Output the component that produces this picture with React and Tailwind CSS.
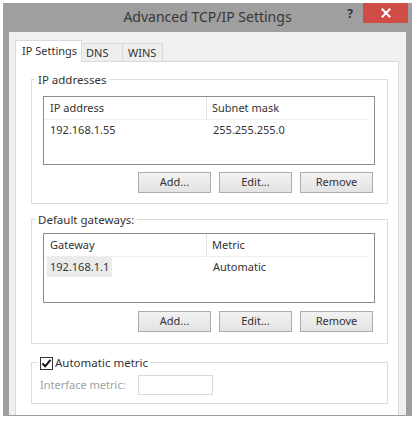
import React from "react";

function Btn({ children }) {
  return (
    <div className="w-[73px] h-[21px] border border-[#acacac] bg-gradient-to-b from-[#f2f2f2] to-[#e3e3e3] flex items-center justify-center text-[#333]">
      {children}
    </div>
  );
}

function ListBox({ cols, row, highlight, h }) {
  return (
    <div className={`border border-[#8c8c8c] bg-white ${h}`}>
      <div className="flex h-[23px] items-center">
        <div className="w-[163px] h-full pl-[6px] flex items-center border-r border-[#e3e3e3] border-b border-b-[#eeeeee]">
          {cols[0]}
        </div>
        <div className="w-[162px] h-full pl-[5px] flex items-center border-b border-[#eeeeee]">{cols[1]}</div>
      </div>
      <div className="flex h-[20px] items-center">
        <div className="w-[163px] h-full flex items-center pl-[3px]">
          <span className={`px-[3px] h-full flex items-center ${highlight ? "bg-[#ebebeb]" : ""}`}>{row[0]}</span>
        </div>
        <div className="pl-[6px]">{row[1]}</div>
      </div>
    </div>
  );
}

export default function App() {
  return (
    <div className="w-[415px] h-[421px] bg-white pt-[3px] pl-[3px] font-['Noto_Sans',sans-serif] text-[11px] text-[#333]">
      <div className="w-[409px] h-[413px] bg-[#9f9f9f] flex flex-col pb-[1px]">
        <div className="h-[29px] shrink-0 grid grid-cols-[1fr_auto_1fr]">
          <div />
          <div className="self-center text-[14px] leading-none text-[#383838] pb-[1px]">Advanced TCP/IP Settings</div>
          <div className="flex justify-end items-start pr-[4px]">
            <span className="mt-[5px] mr-[10px] text-[12px] font-bold leading-none text-[#333]">?</span>
            <div className="w-[45px] h-[20px] bg-[#cf4d45] flex items-center justify-center">
              <svg width="10" height="10" viewBox="0 0 10 10">
                <path d="M1.5 1.5 L8.5 8.5 M8.5 1.5 L1.5 8.5" stroke="#fff" strokeWidth="2" strokeLinecap="square" />
              </svg>
            </div>
          </div>
        </div>
        <div className="flex-1 mx-[6px] bg-[#f0f0f0] pt-[8px] pl-[6px] pr-[7px] flex flex-col">
          <div className="flex items-end">
            <div className="w-[67px] h-[22px] border border-[#d9d9d9] border-b-0 bg-white -mb-px relative z-10 flex items-center pl-[6px]">
              IP Settings
            </div>
            <div className="w-[41px] h-[18px] border border-l-0 border-b-0 border-[#d9d9d9] bg-[#eeeeee] flex items-center pl-[4px] pt-[2px]">
              DNS
            </div>
            <div className="w-[40px] h-[18px] border border-l-0 border-b-0 border-[#d9d9d9] bg-[#eeeeee] flex items-center pl-[5px] pt-[2px]">
              WINS
            </div>
          </div>
          <div className="flex-1 border border-[#d9d9d9] border-b-0 bg-white pl-[15px] pr-[10px] flex flex-col">
            <fieldset className="mt-[10px] border border-[#dcdcdc]">
              <legend className="ml-[3px] px-[3px] leading-[15px] text-[11.5px]">IP addresses</legend>
              <div className="pt-[9px] pl-[11px] pr-[12px] pb-[10px]">
                <ListBox cols={["IP address", "Subnet mask"]} row={["192.168.1.55", "255.255.255.0"]} h="h-[69px]" />
                <div className="mt-[7px] flex justify-end gap-[8px] pr-[2px]">
                  <Btn>Add...</Btn>
                  <Btn>Edit...</Btn>
                  <Btn>Remove</Btn>
                </div>
              </div>
            </fieldset>
            <fieldset className="mt-[8px] border border-[#dcdcdc]">
              <legend className="ml-[3px] px-[3px] leading-[15px] text-[11.5px]">Default gateways:</legend>
              <div className="pt-[6px] pl-[11px] pr-[12px] pb-[11px]">
                <ListBox cols={["Gateway", "Metric"]} row={["192.168.1.1", "Automatic"]} highlight h="h-[70px]" />
                <div className="mt-[8px] flex justify-end gap-[8px] pr-[2px]">
                  <Btn>Add...</Btn>
                  <Btn>Edit...</Btn>
                  <Btn>Remove</Btn>
                </div>
              </div>
            </fieldset>
            <fieldset className="mt-[10px] border border-[#dcdcdc]">
              <legend className="ml-[6px] px-[2px] leading-[15px] text-[11.5px] flex items-center">
                <span className="w-[13px] h-[13px] mt-[3px] border border-[#333] bg-white flex items-center justify-center mr-[2px]">
                  <svg width="11" height="11" viewBox="0 0 11 11">
                    <path d="M1.5 5.5 L4.2 8.3 L9.5 1.8" fill="none" stroke="#111" strokeWidth="2" />
                  </svg>
                </span>
                Automatic metric
              </legend>
              <div className="pt-[5px] pl-[8px] pb-[8px] flex items-center">
                <span className="w-[98px] text-[#a0a0a0]">Interface metric:</span>
                <div className="w-[75px] h-[20px] border border-[#dadada] bg-white" />
              </div>
            </fieldset>
          </div>
        </div>
      </div>
    </div>
  );
}
